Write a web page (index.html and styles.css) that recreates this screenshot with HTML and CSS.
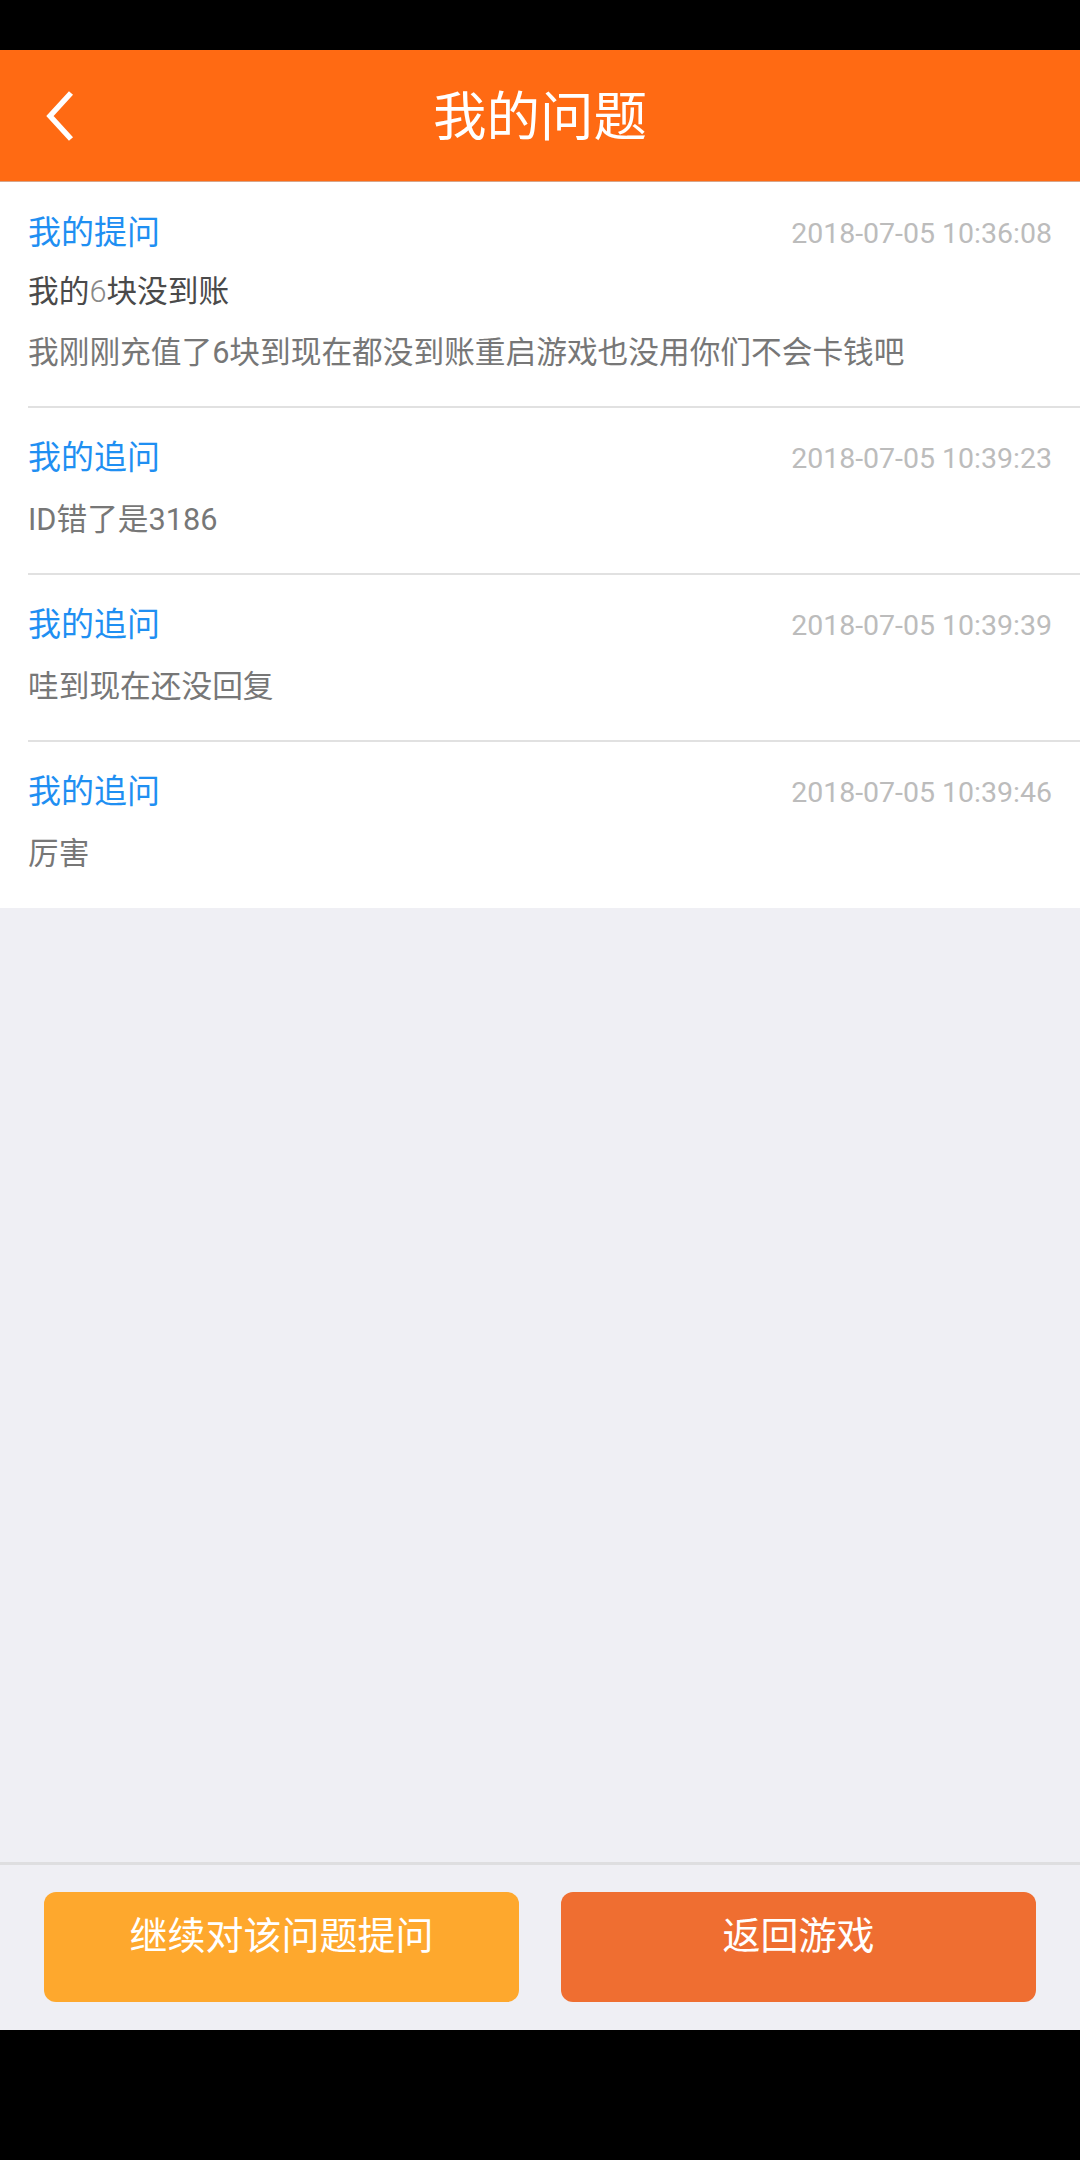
FILE: index.html
```html
<!DOCTYPE html>
<html lang="zh-CN">
<head>
<meta charset="utf-8">
<title>我的问题</title>
<link rel="stylesheet" href="styles.css">
</head>
<body>
<div class="app">
  <div class="status-bar"></div>
  <header class="header">
    <div class="back">
      <svg width="30" height="52" viewBox="0 0 30 52" class="back-icon">
        <polyline points="25,2 4,25 25,48" fill="none" stroke="#fff" stroke-width="5.5" stroke-linejoin="miter" stroke-miterlimit="10"/>
      </svg>
    </div>
    <h1 class="title">我的问题</h1>
    <div class="header-spacer"></div>
  </header>

  <main class="list">
    <section class="item item-first">
      <div class="item-head">
        <span class="label">我的提问</span>
        <span class="time">2018-07-05 10:36:08</span>
      </div>
      <p class="subject">我的<span class="thin">6</span>块没到账</p>
      <p class="content content-q">我刚刚充值了6块到现在都没到账重启游戏也没用你们不会卡钱吧</p>
    </section>
    <section class="item">
      <div class="item-head">
        <span class="label">我的追问</span>
        <span class="time">2018-07-05 10:39:23</span>
      </div>
      <p class="content">ID错了是3186</p>
    </section>
    <section class="item">
      <div class="item-head">
        <span class="label">我的追问</span>
        <span class="time">2018-07-05 10:39:39</span>
      </div>
      <p class="content">哇到现在还没回复</p>
    </section>
    <section class="item item-last">
      <div class="item-head">
        <span class="label">我的追问</span>
        <span class="time">2018-07-05 10:39:46</span>
      </div>
      <p class="content">厉害</p>
    </section>
  </main>

  <div class="fill"></div>

  <footer class="footer">
    <div class="btn btn-ask" role="button">继续对该问题提问</div>
    <div class="btn btn-back" role="button">返回游戏</div>
  </footer>

  <div class="nav-bar"></div>
</div>
</body>
</html>
```

FILE: styles.css
```css
* {
  box-sizing: border-box;
}

html, body {
  margin: 0;
  padding: 0;
}

body {
  width: 1080px;
  height: 2160px;
  overflow: hidden;
  background: #000;
  font-family: Roboto, "Noto Sans CJK SC", "Noto Sans", sans-serif;
}

.app {
  display: flex;
  flex-direction: column;
  height: 2160px;
}

.status-bar {
  height: 50px;
  background: #000;
  flex: none;
}

.header {
  flex: none;
  height: 132px;
  background: #ff6a13;
  border-bottom: 1px solid #d6a58a;
  display: grid;
  grid-template-columns: 1fr auto 1fr;
  align-items: center;
}

.back {
  padding-left: 46px;
  padding-top: 3px;
  display: flex;
  align-items: center;
}

.back-icon {
  display: block;
}

.title {
  margin: 0;
  padding-top: 5px;
  font-size: 53.5px;
  font-weight: 400;
  line-height: 60px;
  color: #fff;
}

.list {
  flex: none;
  background: #fff;
}

.item {
  margin-left: 28px;
  padding: 28px 28px 31px 0;
  border-bottom: 2px solid #e1e1e1;
}

.item-first {
  padding-top: 29px;
}

.item-last {
  border-bottom: none;
  padding-bottom: 32px;
}

.item-head {
  display: flex;
  justify-content: space-between;
  align-items: center;
  height: 44px;
}

.label {
  font-size: 33px;
  line-height: 44px;
  color: #1f8ff2;
}

.time {
  padding-top: 2px;
  font-size: 28.5px;
  line-height: 44px;
  color: #bcbcbc;
}

.subject {
  margin: 15px 0 0;
  font-size: 30.7px;
  line-height: 44px;
  color: #4a4a4a;
}

.thin {
  font-weight: 300;
  color: #888;
}

.content {
  margin: 18px 0 0;
  font-size: 30.7px;
  line-height: 44px;
  color: #777;
}

.content-q {
  margin-top: 17px;
}

.fill {
  flex: 1;
  background: #efeff4;
}

.footer {
  flex: none;
  background: #efeff4;
  border-top: 3px solid #dedee0;
  padding: 27px 44px 28px;
  display: flex;
  gap: 42px;
}

.btn {
  flex: 1;
  height: 110px;
  border-radius: 12px;
  padding-top: 19px;
  font-size: 38px;
  line-height: 50px;
  color: #fff;
  text-align: center;
}

.btn-ask {
  background: #fea82d;
}

.btn-back {
  background: #ef6e31;
}

.nav-bar {
  flex: none;
  height: 130px;
  background: #000;
}
```
